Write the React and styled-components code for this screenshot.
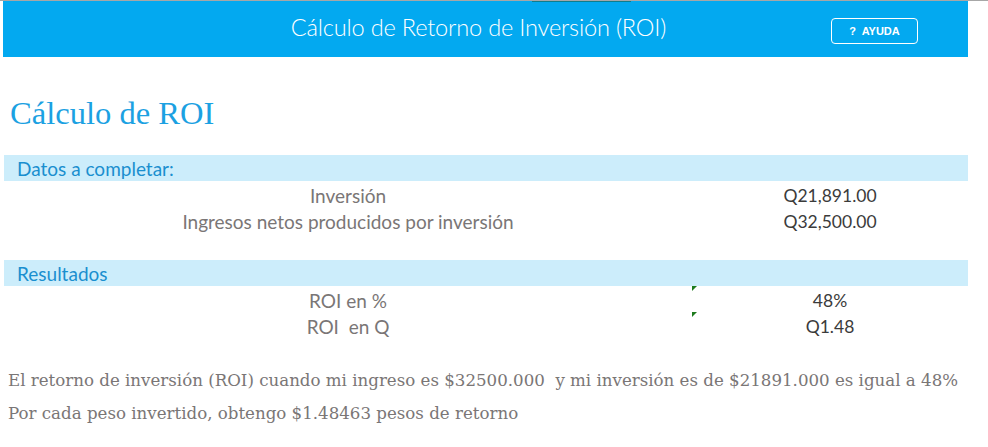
import styled, { createGlobalStyle } from 'styled-components';

const GlobalStyle = createGlobalStyle`
  body {
    margin: 0;
    background: #fff;
    font-family: "Lato", "Liberation Sans", sans-serif;
  }
`;

const Page = styled.div`
  width: 988px;
  height: 447px;
  overflow: hidden;
  border-top: 1px solid #a7a7a7;
  position: relative;
`;

const TabMark = styled.div`
  position: absolute;
  top: -1px;
  left: 532px;
  width: 99px;
  height: 2px;
  background: #0f7d8c;
`;

const Sheet = styled.div`
  margin-left: 4px;
  width: 964px;
`;

const Header = styled.header`
  background: #03a9f0;
  height: 56px;
  display: grid;
  grid-template-columns: 1fr auto 1fr;
  align-items: center;
  margin-left: -1px;
`;

const HeaderTitle = styled.h1`
  grid-column: 2;
  margin: 0 14px 0 0;
  color: #fff;
  font-family: "Lato", sans-serif;
  font-weight: 300;
  font-size: 23.6px;
  letter-spacing: -0.2px;
  padding-bottom: 4px;
`;

const HelpButton = styled.button`
  justify-self: end;
  margin-right: 50px;
  width: 87px;
  height: 26px;
  border: 1px solid #fff;
  border-radius: 4px;
  background: transparent;
  color: #fff;
  font-family: "Liberation Sans", Arial, sans-serif;
  font-weight: bold;
  font-size: 11px;
  cursor: pointer;
  margin-top: 4px;
`;

const PageTitle = styled.h2`
  margin: 0;
  padding: 38px 0 0 6px;
  height: 98px;
  box-sizing: border-box;
  color: #1ba1e2;
  font-family: "Liberation Serif", serif;
  font-weight: normal;
  font-size: 32.6px;
`;

const SectionBar = styled.div`
  background: #ccedfb;
  height: 26px;
  display: flex;
  align-items: center;
  padding-left: 13px;
  color: #1a8fcf;
  font-size: 19px;
`;

const Rows = styled.div`
  display: grid;
  grid-template-columns: 688px 276px;
  grid-auto-rows: 26px;
  margin-bottom: ${(p) => (p.$gap ? '27px' : '0')};
`;

const Cell = styled.div`
  position: relative;
  display: flex;
  align-items: center;
  justify-content: center;
  padding-top: 3px;
  font-size: ${(p) => (p.$value ? '17.5px' : '19px')};
  color: ${(p) => (p.$value ? '#3b3b3b' : '#7a7676')};
`;

const ErrorMark = styled.span`
  position: absolute;
  left: 0;
  top: 0;
  width: 0;
  height: 0;
  border-top: 5px solid #1e7b1e;
  border-right: 5px solid transparent;
`;

const Note = styled.p`
  margin: 0;
  padding-left: 8px;
  color: #7a7676;
  font-family: "DejaVu Serif", "Liberation Serif", serif;
  font-size: 16.65px;
  line-height: 33px;
  white-space: nowrap;
`;

const Notes = styled.div`
  padding-top: 26px;
`;

const datos = [
  ['Inversión', 'Q21,891.00'],
  ['Ingresos netos producidos por inversión', 'Q32,500.00'],
];

const resultados = [
  ['ROI en %', '48%'],
  ['ROI\u00a0 en Q', 'Q1.48'],
];

export default function App() {
  return (
    <>
      <GlobalStyle />
      <Page>
        <TabMark />
        <Sheet>
          <Header>
            <HeaderTitle>Cálculo de Retorno de Inversión (ROI)</HeaderTitle>
            <HelpButton>?&nbsp; AYUDA</HelpButton>
          </Header>
          <PageTitle>Cálculo de ROI</PageTitle>
          <SectionBar>Datos a completar:</SectionBar>
          <Rows $gap>
            {datos.map(([label, value]) => (
              <>
                <Cell key={label}>{label}</Cell>
                <Cell key={value} $value>{value}</Cell>
              </>
            ))}
          </Rows>
          <SectionBar>Resultados</SectionBar>
          <Rows>
            {resultados.map(([label, value]) => (
              <>
                <Cell key={label}>{label}</Cell>
                <Cell key={value} $value>
                  <ErrorMark />
                  {value}
                </Cell>
              </>
            ))}
          </Rows>
        </Sheet>
        <Notes>
          <Note>
            El retorno de inversión (ROI) cuando mi ingreso es $32500.000&nbsp; y mi inversión es de $21891.000 es igual a 48%
          </Note>
          <Note>Por cada peso invertido, obtengo $1.48463 pesos de retorno</Note>
        </Notes>
      </Page>
    </>
  );
}
